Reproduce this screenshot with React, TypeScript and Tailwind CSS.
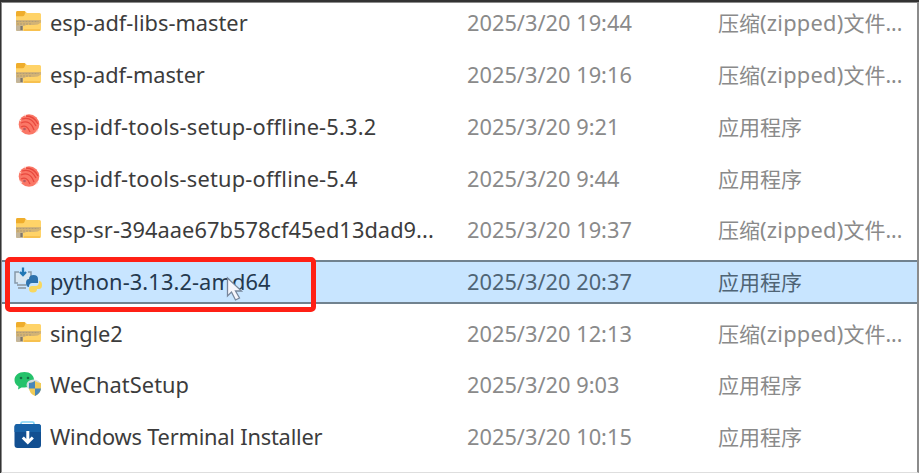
import React from "react";

type Kind = "zip" | "esp" | "python" | "wechat" | "terminal";

interface FileRow {
  kind: Kind;
  name: string;
  date: string;
  tracking: string;
}

const files: FileRow[] = [
  { kind: "zip", name: "esp-adf-libs-master", date: "2025/3/20 19:44", tracking: "tracking-[0px]" },
  { kind: "zip", name: "esp-adf-master", date: "2025/3/20 19:16", tracking: "tracking-[-0.05px]" },
  { kind: "esp", name: "esp-idf-tools-setup-offline-5.3.2", date: "2025/3/20 9:21", tracking: "tracking-[0.2px]" },
  { kind: "esp", name: "esp-idf-tools-setup-offline-5.4", date: "2025/3/20 9:44", tracking: "tracking-[0.2px]" },
  { kind: "zip", name: "esp-sr-394aae67b578cf45ed13dad9...", date: "2025/3/20 19:37", tracking: "tracking-[0.05px]" },
  { kind: "python", name: "python-3.13.2-amd64", date: "2025/3/20 20:37", tracking: "tracking-[0.1px]" },
  { kind: "zip", name: "single2", date: "2025/3/20 12:13", tracking: "tracking-[-0.1px]" },
  { kind: "wechat", name: "WeChatSetup", date: "2025/3/20 9:03", tracking: "tracking-[0.05px]" },
  { kind: "terminal", name: "Windows Terminal Installer", date: "2025/3/20 10:15", tracking: "tracking-[-0.2px]" },
];

function FileIcon({ kind }: { kind: Kind }) {
  const cls = "mb-[2px] block h-[30px] w-[30px] shrink-0";
  if (kind === "zip")
    return (
      <svg viewBox="0 0 30 30" className={cls}>
        <path d="M3 5.5q0-1.5 1.500-1.500h7l2.500 2h12.500q1.500 0 1.500 1.500v15q0 1.500-1.500 1.500h-22q-1.500 0-1.500-1.500z" fill="#ffd368" />
        <path d="M3 5.500q0-1.500 1.500-1.500h6.500q1 0 1.500 1l-1 3q-.5 1.200-2 1.200h-6.500z" fill="#efad2c" />
        <path d="M3 13h25v2.500q-3 3-9 2.500-5-1-8 1h-8z" fill="#d3b374" />
        <path d="M3.500 14.500h22M4 17h14" stroke="#b09c79" strokeWidth="1.100" strokeDasharray="2 1" />
        <path d="M3 18.500h7v5.500h-5.500q-1.500 0-1.500-1.500z" fill="#c3b59a" />
        <path d="M8.500 19v4" stroke="#7d7668" strokeWidth="2.200" />
        <path d="M11 23h16" stroke="#f6bd49" strokeWidth="1.600" />
      </svg>
    );
  if (kind === "esp")
    return (
      <svg viewBox="0 0 30 30" className={cls}>
        <circle cx="16" cy="13.500" r="10.300" fill="#fa7766" />
        <g fill="none" stroke="#e8483e" strokeWidth="1.300">
          <path d="M9 8q9-3 14 7M8 12q9-4 13 7M8 16q6-3 9 5M13 5q8 0 12 8" />
        </g>
        <path d="M6 9l2 1M7 18l2 2M11 4l2 1M23 21l2-2" stroke="#ffd0c8" strokeWidth="1.200" />
        <circle cx="11.500" cy="18" r="1.300" fill="#b65a60" />
      </svg>
    );
  if (kind === "python")
    return (
      <svg viewBox="0 0 30 30" className={cls}>
        <path d="M2 6h16v11h-16z" fill="#d9e7f2" />
        <path d="M6 6h-4v11h3M15 6h3v5" fill="none" stroke="#8799a9" strokeWidth="1.500" />
        <path d="M4 19h9M5 22h8" stroke="#9aa8b4" strokeWidth="1.800" />
        <path d="M10 1.500v7M7 6l3 3 3-3" fill="none" stroke="#2177b5" strokeWidth="2.300" />
        <path d="M16 13q0-4 4.500-4t4.500 4v4h-6q-3 0-3 4-3 0-3-4t3-4z" fill="#2d72ad" />
        <path d="M26 15q3 0 3 4t-3 4h-2q0 3.500-4 3.500t-4-3.500q0-3 3-3h4q3 0 3-5z" fill="#f8d75e" />
      </svg>
    );
  if (kind === "wechat")
    return (
      <svg viewBox="0 0 30 30" className={cls}>
        <path d="M11.500 3c-6 0-10 3.500-10 8 0 3 1.500 5 4 6.500l-.5 3 3.500-2h3c5.500 0 9.500-3 9.500-7.500s-4-8-9.500-8z" fill="#25c26b" />
        <circle cx="8" cy="9" r="1.300" fill="#146e45" />
        <circle cx="15" cy="9" r="1.300" fill="#146e45" />
        <ellipse cx="20.500" cy="16" rx="7" ry="5.500" fill="#d2dde0" />
        <path d="M22 12q3 2 6 2v5q0 5-6 8-6-3-6-8v-5q3 0 6-2z" fill="#f0cb57" />
        <path d="M22 12v7.500h-6v-5.500q3 0 6-2zM22 19.500h6q-.5 4.500-6 7.500z" fill="#4786b8" />
      </svg>
    );
  return (
    <svg viewBox="0 0 30 30" className={cls}>
      <path d="M8 4v-1.500q0-1.500 1.500-1.500h10q1.500 0 1.500 1.500v1.500" fill="none" stroke="#7fd2f5" strokeWidth="1.700" />
      <rect x="1.500" y="3" width="26.500" height="24" rx="3" fill="#124f91" />
      <path d="M1.500 6q0-3 3-3h20.500q3 0 3 3v5h-26.500z" fill="#1761a6" />
      <path d="M14.800 10v11M9.800 16.500l5 5 5-5" fill="none" stroke="#fff" strokeWidth="3" />
    </svg>
  );
}

export default function App() {
  return (
    <div className="relative h-[473px] w-[919px] overflow-hidden border-t-2 border-l border-[#333] bg-white font-['Noto_Sans','Noto_Sans_CJK_SC',sans-serif] text-[21.800px] leading-[30px]">
      <div className="h-full overflow-hidden border-t border-r-2 border-b border-l border-[#8b8b8b] border-b-[#dedede]">
        <div className="-mt-[5.400px]">
          {files.map((f) => {
            const selected = f.kind === "python";
            return (
              <div
                key={f.name}
                className={`flex h-[51.700px] items-center ${selected ? "text-[#4f6475]" : "text-[#8a8a8a]"}`}
              >
                <div className={`flex h-[44px] w-full items-center pl-[11px] whitespace-nowrap ${selected ? "border-y-2 border-[#71828f] bg-[#c8e5ff]" : ""}`}>
                  <FileIcon kind={f.kind} />
                  <span className={`ml-[7px] w-[417px] shrink-0 ${f.tracking} ${selected ? "text-[#24384d]" : "text-[#3c3c3c]"}`}>{f.name}</span>
                  <span className="w-[251px] shrink-0">{f.date}</span>
                  {f.kind === "zip" ? (
                    <span className="text-[21px]">
                      压缩<span className="text-[21.800px] tracking-[0.25px]">(zipped)</span>文件...
                    </span>
                  ) : (
                    <span className="text-[21px]">应用程序</span>
                  )}
                </div>
              </div>
            );
          })}
        </div>
      </div>
      <div className="absolute top-[255px] left-[4px] h-[55px] w-[311px] rounded-[5px] border-[5px] border-[#ff2015]" />
      <svg viewBox="0 0 18 26" className="absolute top-[274px] left-[224px] h-[26px] w-[19px]">
        <path d="M2 2v18l4-4 4 8 4-2-4-7h6z" fill="#f6f6fc" stroke="#77869b" strokeWidth="1.300" />
      </svg>
    </div>
  );
}
